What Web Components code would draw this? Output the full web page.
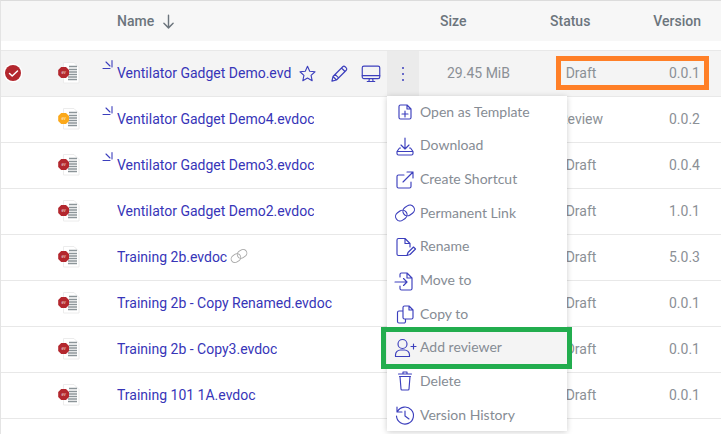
<!DOCTYPE html>
<html lang="en"><head><meta charset="utf-8"><title>Files</title>
<style>html,body{margin:0;background:#fff;overflow:hidden}</style></head>
<body>
<file-page>
  <file-header></file-header>
  <file-row name="Ventilator Gadget Demo.evd" size="29.45 MiB" status="Draft" version="0.0.1" selected shortcut badge="#b3272e"></file-row>
  <file-row name="Ventilator Gadget Demo4.evdoc" status="Review" version="0.0.2" shortcut badge="#fba81a"></file-row>
  <file-row name="Ventilator Gadget Demo3.evdoc" status="Draft" version="0.0.4" shortcut badge="#b3272e"></file-row>
  <file-row name="Ventilator Gadget Demo2.evdoc" status="Draft" version="1.0.1" badge="#b3272e"></file-row>
  <file-row name="Training 2b.evdoc" status="Draft" version="5.0.3" linked badge="#b3272e"></file-row>
  <file-row name="Training 2b - Copy Renamed.evdoc" status="Draft" version="0.0.1" badge="#b3272e"></file-row>
  <file-row name="Training 2b - Copy3.evdoc" status="Draft" version="0.0.1" badge="#b3272e"></file-row>
  <file-row name="Training 101 1A.evdoc" status="Draft" version="0.0.1" badge="#b3272e"></file-row>
  <file-row blank></file-row>
  <context-menu slot="over">
    <menu-entry icon="template">Open as Template</menu-entry>
    <menu-entry icon="download">Download</menu-entry>
    <menu-entry icon="shortcut">Create Shortcut</menu-entry>
    <menu-entry icon="link">Permanent Link</menu-entry>
    <menu-entry icon="rename">Rename</menu-entry>
    <menu-entry icon="move">Move to</menu-entry>
    <menu-entry icon="copy">Copy to</menu-entry>
    <menu-entry icon="reviewer" active>Add reviewer</menu-entry>
    <menu-entry icon="trash">Delete</menu-entry>
    <menu-entry icon="history">Version History</menu-entry>
  </context-menu>
  <mark-box slot="over" style="--l:556px;--t:56px;--w:153px;--h:34px;--c:#ff7f27"></mark-box>
  <mark-box slot="over" style="--l:381px;--t:327px;--w:191px;--h:42px;--c:#22ad4e"></mark-box>
</file-page>
<script>
const ICONS = {
  template:'<path d="M7.5 5H14l4 4v8.5a1.5 1.5 0 0 1-1.5 1.5h-9A1.5 1.5 0 0 1 6 17.5v-11A1.5 1.5 0 0 1 7.5 5zM14 5v4h4M12 11v6M9 14h6"/>',
  download:'<path d="M12 4v11M8 11l4 4 4-4M7.500 14H6.500L4 17.500V19.500A1.500 1.500 0 0 0 5.500 21h13a1.500 1.500 0 0 0 1.500-1.500v-2L17.500 14h-1M4 17.500h16"/>',
  shortcut:'<path d="M11 7H5.500A1.500 1.500 0 0 0 4 8.500v10A1.500 1.500 0 0 0 5.500 20h11a1.500 1.500 0 0 0 1.500-1.500V14M10 14l10-10M14 4h6v6"/>',
  link:'<g transform="rotate(-35 12 12)"><rect x="1.500" y="7.500" width="12" height="9" rx="4.500"/><rect x="10.500" y="7.500" width="12" height="9" rx="4.500"/></g>',
  rename:'<path d="M14 20.500H5.500A1.500 1.500 0 0 1 4 19V5A1.500 1.500 0 0 1 5.500 3.500H12l5 5v3.500M12 3.500v5h5M14 20.500l1-3 5.500-5.500 2 2-5.500 5.500z"/>',
  move:'<path d="M7 8V5.500A1.500 1.500 0 0 1 8.500 4H14l5 5v10.500a1.500 1.500 0 0 1-1.500 1.500h-9A1.500 1.500 0 0 1 7 19.500V17M14 4v5h5M2 13h12M10.500 9.500L14 13l-3.500 3.500"/>',
  copy:'<path d="M10 9H6A1.500 1.500 0 0 0 4.500 10.500v9A1.500 1.500 0 0 0 6 21h5a1.500 1.500 0 0 0 1.500-1.500V17M10 5.500A1.500 1.500 0 0 1 11.500 4H16l4 4v7.500a1.500 1.500 0 0 1-1.500 1.500h-7A1.500 1.500 0 0 1 10 15.500zM16 4v4h4"/>',
  reviewer:'<circle cx="9.500" cy="8" r="4.500"/><path d="M2.500 20.500v-1.500a5 5 0 0 1 5-5h4a5 5 0 0 1 5 5v1.500zM18 10.500h5M20.500 8v5"/>',
  trash:'<path d="M5.500 5h13M10 5V3h4v2M6.500 7.500h11M7 7.500L8 20a1 1 0 0 0 1 1h6a1 1 0 0 0 1-1l1-12.500"/>',
  history:'<path d="M4.500 8.500A8.500 8.500 0 1 1 3.500 13M4 4v5h5M12 8v5l4 3"/>',
  star:'<path d="M12 2.800l2.800 6.300 6.700.7-5 4.600 1.400 6.700-5.900-3.400-5.900 3.400 1.400-6.700-5-4.600 6.700-.7z"/>',
  pencil:'<path d="M3.500 20.500l1.300-5.500L16.500 3.300a2 2 0 0 1 2.800 0l1.400 1.400a2 2 0 0 1 0 2.800L9 19.200zM4.800 15L9 19.200M15 4.800l4.200 4.200M7.300 12.500l4.200 4.200"/>',
  monitor:'<rect x="1.500" y="2.500" width="21" height="15" rx="2"/><path d="M1.500 14h21M10 17.500l-.5 3.500M14 17.500l.5 3.500M7.500 21h9"/>',
  tick:'<path d="M1 7.500h7M10 -.5v6.500M4 1l4 4"/>',
  arrow:'<path d="M12 3v18M5.500 14.500L12 21l6.500-6.500"/>'
};
class UiIcon extends HTMLElement{
  connectedCallback(){
    if(this.shadowRoot) return;
    const s=this.getAttribute('size')||24, vb=this.getAttribute('vb')||'0 0 24 24', c=this.getAttribute('color')||'#3c3fbd', w=this.getAttribute('stroke')||'1.3';
    this.attachShadow({mode:'open'}).innerHTML=`<style>:host{display:block;width:${s}px;height:${s}px;flex:none}svg{display:block;width:100%;height:100%;overflow:visible}</style>
    <svg viewBox="${vb}" fill="none" stroke="${c}" stroke-width="${w}" stroke-linecap="round" stroke-linejoin="round">${ICONS[this.getAttribute('name')]||''}</svg>`;
  }
}
customElements.define('ui-icon',UiIcon);

class FilePage extends HTMLElement{
  constructor(){super();this.attachShadow({mode:'open'}).innerHTML=`<style>
    :host{display:block;position:relative;width:721px;height:434px;overflow:hidden;background:#fff;box-sizing:border-box;border-top:1px solid #dcdcdc;border-left:1px solid #e4e4e4}
    .col{display:flex;flex-direction:column}
    .over{position:absolute;left:-1px;top:-1px}
  </style><div class="col"><slot></slot></div><div class="over"><slot name="over"></slot></div>`;}
}
customElements.define('file-page',FilePage);

class FileHeader extends HTMLElement{
  constructor(){super();this.attachShadow({mode:'open'}).innerHTML=`<style>
    :host{display:grid;grid-template-columns:323px 110px 102px 49px;height:40px;padding-left:116px;margin-bottom:9px;background:#f7f7f7;align-items:center;font:500 14px Roboto,sans-serif;color:#6c757d;white-space:nowrap;padding-right:21px}
    .n{display:flex;align-items:center;gap:6px}
    .v{text-align:right}
  </style><div class="n">Name <ui-icon name="arrow" size="17" color="#6c757d" stroke="2"></ui-icon></div><div>Size</div><div>Status</div><div class="v">Version</div>`;}
}
customElements.define('file-header',FileHeader);

class FileDoc extends HTMLElement{
  connectedCallback(){
    if(this.shadowRoot) return;
    const c=this.getAttribute('badge');
    const lines=[5.5,8.5,11,13.5,16,18.5].map((y,i)=>`<path d="M${i<2?11:10} ${y}H19" stroke="#8c9599" stroke-width="1.500"/>`).join('');
    this.attachShadow({mode:'open'}).innerHTML=`<style>:host{display:block;width:22px;height:24px}svg{display:block}</style>
    <svg width="22" height="24" viewBox="0 0 22 24"><path d="M5.500 1.500H16L21 6.500V22H5.500z" fill="#fff" stroke="#ececec"/>${lines}
    <path d="M3.200 6h4.800l3 3v5l-3 3H3.200L.2 14V9z" fill="${c}"/>
    <text x="5.600" y="13" text-anchor="middle" font-family="Roboto,sans-serif" font-size="4.500" font-style="italic" fill="#fff" fill-opacity=".75">ev</text></svg>`;
  }
}
customElements.define('file-doc',FileDoc);

class FileRow extends HTMLElement{
  connectedCallback(){
    if(this.shadowRoot) return;
    const a=n=>this.getAttribute(n), h=n=>this.hasAttribute(n);
    const blank=h('blank');
    this.attachShadow({mode:'open'}).innerHTML=`<style>
      :host{display:grid;grid-template-columns:24px 71px 21px 302px 91px 142px 48px;box-sizing:border-box;height:46px;padding-bottom:1px;border-top:1px solid #e8e8e8;align-items:center;font:14px Roboto,sans-serif;color:#8b9096;white-space:nowrap;flex:none}
      :host([selected]){background:#f4f4f4}
      .chk{margin-left:4px;width:16px;height:16px;border-radius:50%;background:#b3272e;box-shadow:0 0 0 1.500px #fff;display:flex;align-items:center;justify-content:center}
      .doc{padding-left:33px}
      .tick{align-self:start;padding:10px 0 0 6px}
      .namecell{display:flex;align-items:center;height:100%;min-width:0}
      .name{color:#3735b8;overflow:hidden;flex:0 1 auto;min-width:0}
      :host([selected]) .name{flex:0 0 174px}
      .chain{margin-left:2px;margin-top:-2px}
      .acts{display:flex;margin-left:auto;height:calc(100% + 1px);align-self:flex-start}
      .act{width:32px;display:flex;align-items:center;justify-content:center}
      .kebab{background:#ebebeb;flex-direction:column;gap:4px}
      .kebab i{display:block;width:2px;height:2px;border-radius:1px;background:#3c3fbd}
      .size{text-align:right}
      .status{text-align:center}
      .ver{text-align:right}
    </style>${blank?'':`
      <div>${h('selected')?'<div class="chk"><svg width="11" height="9" viewBox="0 0 11 9"><path d="M1.500 4.500L4.200 7 9.500 2" fill="none" stroke="#fff" stroke-width="1.500" stroke-linecap="round" stroke-linejoin="round"/></svg></div>':''}</div>
      <div class="doc"><file-doc badge="${a('badge')}"></file-doc></div>
      <div class="tick">${h('shortcut')?'<ui-icon name="tick" size="11" vb="0 0 11 11" stroke="1.100"></ui-icon>':''}</div>
      <div class="namecell"><span class="name">${a('name')}</span>
        ${h('linked')?'<ui-icon class="chain" name="link" size="20" color="#a8a8a8" stroke="1.100"></ui-icon>':''}
        ${h('selected')?`<div class="acts"><div class="act"><ui-icon name="star" size="19" stroke="1.400"></ui-icon></div><div class="act"><ui-icon name="pencil" size="20" stroke="1.400"></ui-icon></div><div class="act"><ui-icon name="monitor" size="20" stroke="1.400"></ui-icon></div><div class="act kebab"><i></i><i></i><i></i></div></div>`:''}
      </div>
      <div class="size">${a('size')||''}</div>
      <div class="status">${a('status')}</div>
      <div class="ver">${a('version')}</div>`}`;
  }
}
customElements.define('file-row',FileRow);

class ContextMenu extends HTMLElement{
  constructor(){super();this.attachShadow({mode:'open'}).innerHTML=`<style>
    :host{display:block;position:absolute;left:387px;top:96px;width:180px;height:335px;background:#fff;box-shadow:0 1px 6px rgba(0,0,0,.2)}
  </style><slot></slot>`;}
}
customElements.define('context-menu',ContextMenu);

class MenuEntry extends HTMLElement{
  connectedCallback(){
    if(this.shadowRoot) return;
    this.attachShadow({mode:'open'}).innerHTML=`<style>
      :host{display:flex;align-items:center;gap:3px;box-sizing:border-box;height:33.650px;padding:0 0 1px 6px;font:14px Lato,sans-serif;color:#868c94;white-space:nowrap}
      :host([active]){background:#f4f4f4}
      .t{margin-bottom:2px}
    </style><ui-icon name="${this.getAttribute('icon')}" size="24" stroke="1.150"></ui-icon><span class="t"><slot></slot></span>`;
  }
}
customElements.define('menu-entry',MenuEntry);

class MarkBox extends HTMLElement{
  constructor(){super();this.attachShadow({mode:'open'}).innerHTML=`<style>
    :host{display:block;position:absolute;left:var(--l);top:var(--t);width:var(--w);height:var(--h);box-sizing:border-box;border:5px solid var(--c);pointer-events:none}
  </style>`;}
}
customElements.define('mark-box',MarkBox);
</script>
</body></html>
